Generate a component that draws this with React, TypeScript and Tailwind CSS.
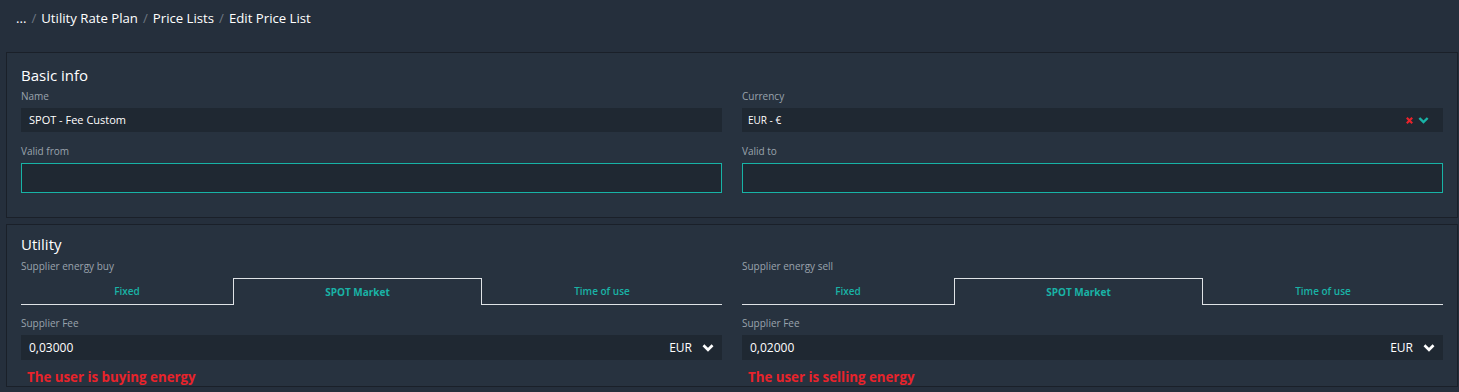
const font = { fontFamily: '"Open Sans", "Noto Sans", sans-serif' };

function Label({ children }: { children: React.ReactNode }) {
  return <div className="text-[10px] leading-[14px] text-[#9aa3ad]">{children}</div>;
}

function Chevron({ className }: { className?: string }) {
  return (
    <svg viewBox="0 0 10 10" className={className} fill="none" stroke="currentColor" strokeWidth="2.2" strokeLinecap="square">
      <path d="M2 3.5 5 6.5 8 3.5" />
    </svg>
  );
}

function Tabs() {
  return (
    <div className="mt-[5px] flex h-[27px] text-[10px] font-semibold text-[#19b3a6]">
      <div className="flex w-[212px] items-center justify-center border-b border-[#dfe3e6]">Fixed</div>
      <div className="flex w-[249px] items-center justify-center border border-b-0 border-[#dfe3e6] font-bold">
        SPOT Market
      </div>
      <div className="flex flex-1 items-center justify-center border-b border-[#dfe3e6]">Time of use</div>
    </div>
  );
}

function FeeColumn({ title, value, note }: { title: string; value: string; note: string }) {
  return (
    <div>
      <Label>{title}</Label>
      <Tabs />
      <div className="mt-[11px]">
        <Label>Supplier Fee</Label>
      </div>
      <div className="mt-[5px] flex h-[25px] items-center justify-between bg-[#1f2832] pl-[8px] pr-[8px] text-[12px] text-white">
        <span>{value}</span>
        <span className="flex items-center gap-[10px]">
          EUR
          <Chevron className="h-[12px] w-[12px]" />
        </span>
      </div>
      <div className="mt-[7px] pl-[6px] text-[13.3px] font-bold leading-[20px] text-[#e8232b]">{note}</div>
    </div>
  );
}

export default function App() {
  return (
    <div style={font} className="h-[392px] w-full overflow-hidden bg-[#252f3c]">
      <div className="flex h-[52px] items-start gap-[5px] px-[16px] pt-[9px] text-[13.2px] leading-[18px] text-white">
        <span>...</span>
        <span className="text-[#6d7782]">/</span>
        <span>Utility Rate Plan</span>
        <span className="text-[#6d7782]">/</span>
        <span>Price Lists</span>
        <span className="text-[#6d7782]">/</span>
        <span>Edit Price List</span>
      </div>

      <section className="ml-[6px] mr-[1px] h-[166px] border border-[#1a2029] bg-[#27323f] px-[14px] pt-[12px]">
        <h2 className="text-[15px] font-medium leading-[20px] text-white">Basic info</h2>
        <div className="mt-[4px] grid grid-cols-2 gap-x-[20px]">
          <div>
            <Label>Name</Label>
            <div className="mt-[5px] flex h-[24px] items-center bg-[#1f2832] px-[8px] text-[11px] text-white">
              SPOT - Fee Custom
            </div>
          </div>
          <div>
            <Label>Currency</Label>
            <div className="mt-[5px] flex h-[24px] items-center justify-between bg-[#1f2832] pl-[6px] pr-[14px] text-[10px] text-white">
              <span>EUR - €</span>
              <span className="flex items-center gap-[4px]">
                <svg viewBox="0 0 10 10" className="h-[9px] w-[9px] text-[#e8232b]" stroke="currentColor" strokeWidth="2.4">
                  <path d="M2 2 8 8M8 2 2 8" />
                </svg>
                <Chevron className="h-[11px] w-[11px] text-[#19b3a6]" />
              </span>
            </div>
          </div>
          <div className="mt-[12px]">
            <Label>Valid from</Label>
            <div className="mt-[5px] h-[30px] border border-[#17b3a6] bg-[#1f2832]" />
          </div>
          <div className="mt-[12px]">
            <Label>Valid to</Label>
            <div className="mt-[5px] h-[30px] border border-[#17b3a6] bg-[#1f2832]" />
          </div>
        </div>
      </section>

      <section className="ml-[6px] mr-[1px] mt-[6px] h-[163px] border border-[#1a2029] bg-[#27323f] px-[14px] pt-[9px]">
        <h2 className="text-[15px] font-medium leading-[20px] text-white">Utility</h2>
        <div className="mt-[5px] grid grid-cols-2 gap-x-[20px]">
          <FeeColumn title="Supplier energy buy" value="0,03000" note="The user is buying energy" />
          <FeeColumn title="Supplier energy sell" value="0,02000" note="The user is selling energy" />
        </div>
      </section>
    </div>
  );
}
